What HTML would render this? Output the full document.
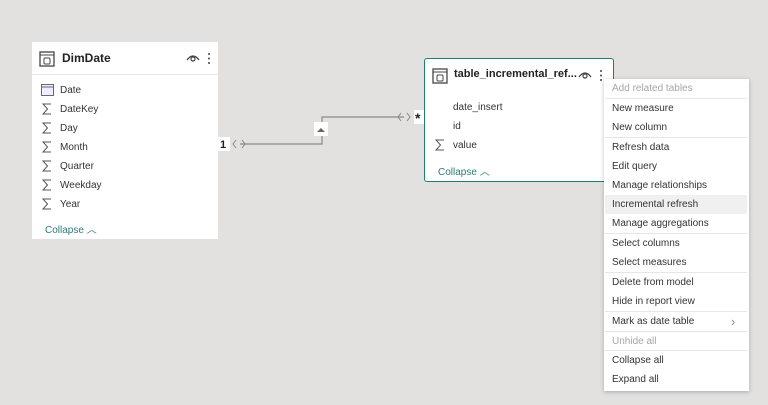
<!DOCTYPE html>
<html><head><style>
*{margin:0;padding:0;box-sizing:border-box}
body{width:768px;height:405px;background:#e2e1df;font-family:"Liberation Sans",sans-serif;position:relative;overflow:hidden;color:#333}
.a{position:absolute;white-space:nowrap}
.card{position:absolute;background:#fff}
.f{font-size:10px;color:#333}
.m{position:absolute;left:605px;width:142px;height:19px;font-size:10px;line-height:19px;padding-left:7px;color:#333}
.sep{position:absolute;left:605px;width:142px;height:1px;background:#e6e6e6}
</style></head><body>
<svg width="0" height="0" style="position:absolute"><defs><symbol id="sg" viewBox="0 0 10 12"><path d="M9 1 H1 L5.5 6 L1 11 H9" fill="none" stroke="#555" stroke-width="1"/></symbol></defs></svg>
<svg class="a" style="left:0;top:0" width="768" height="405">
<path d="M240 144 H322 V117 H404" stroke="#8a8a8a" stroke-width="1.2" fill="none"/>
<path d="M236 140 l-3 4 l3 4 M242 140 l3 4 l-3 4" stroke="#888" fill="none"/>
<path d="M401 113 l-3 4 l3 4 M407 113 l3 4 l-3 4" stroke="#888" fill="none"/>
<rect x="314" y="122" width="14" height="14" fill="#fff"/>
<path d="M317 132 l4 -4 l4 4z" fill="#666"/>
<rect x="218" y="137" width="12" height="14" fill="#fff"/>
<text x="220" y="148" font-size="11" font-weight="bold" fill="#222" font-family="Liberation Sans">1</text>
<rect x="414" y="110" width="11" height="14" fill="#fff"/>
<text x="415" y="123" font-size="14" font-weight="bold" fill="#222" font-family="Liberation Sans">*</text>
</svg>

<div class="card" style="left:32px;top:42px;width:186px;height:197px">
 <svg class="a" style="left:7px;top:9px" width="16" height="16"><rect x="1" y="1" width="14" height="14" fill="none" stroke="#444" stroke-width="1.3"/><line x1="1" y1="4" x2="15" y2="4" stroke="#444"/><rect x="5" y="7" width="6" height="6" rx="1" fill="none" stroke="#444"/></svg>
 <div class="a" style="left:30px;top:9px;font-size:12px;font-weight:bold;color:#222">DimDate</div>
 <svg class="a" style="left:154px;top:11px" width="14" height="10"><path d="M1 7 Q7 -1 13 7" fill="none" stroke="#444" stroke-width="1.2"/><circle cx="7" cy="6" r="2" fill="none" stroke="#444" stroke-width="1.2"/></svg>
 <svg class="a" style="left:175px;top:10px" width="4" height="14"><circle cx="2" cy="2" r="1" fill="#444"/><circle cx="2" cy="6.5" r="1" fill="#444"/><circle cx="2" cy="11" r="1" fill="#444"/></svg>
 <div class="a" style="left:0;top:32px;width:186px;height:1px;background:#e8e8e8"></div>
 <svg class="a" style="left:9px;top:42px" width="13" height="12"><rect x="0.5" y="0.5" width="12" height="11" fill="#eef" stroke="#667"/><line x1="0" y1="3" x2="13" y2="3" stroke="#667"/></svg>
 <div class="a f" style="left:28px;top:43px">Date</div>
 <svg class="a" style="left:10px;top:61px" width="10" height="12"><use href="#sg"/></svg><div class="a f" style="left:28px;top:62px">DateKey</div>
 <svg class="a" style="left:10px;top:80px" width="10" height="12"><use href="#sg"/></svg><div class="a f" style="left:28px;top:81px">Day</div>
 <svg class="a" style="left:10px;top:99px" width="10" height="12"><use href="#sg"/></svg><div class="a f" style="left:28px;top:100px">Month</div>
 <svg class="a" style="left:10px;top:118px" width="10" height="12"><use href="#sg"/></svg><div class="a f" style="left:28px;top:119px">Quarter</div>
 <svg class="a" style="left:10px;top:137px" width="10" height="12"><use href="#sg"/></svg><div class="a f" style="left:28px;top:138px">Weekday</div>
 <svg class="a" style="left:10px;top:156px" width="10" height="12"><use href="#sg"/></svg><div class="a f" style="left:28px;top:157px">Year</div>
 <div class="a" style="left:13px;top:179px;font-size:10px;color:#2b7a78">Collapse ︿</div>
</div>

<div class="card" style="left:424px;top:58px;width:190px;height:124px;border:1.5px solid #1f7f6e;border-radius:3px">
 <svg class="a" style="left:7px;top:9px" width="16" height="16"><rect x="1" y="1" width="14" height="14" fill="none" stroke="#444" stroke-width="1.3"/><line x1="1" y1="4" x2="15" y2="4" stroke="#444"/><rect x="5" y="7" width="6" height="6" rx="1" fill="none" stroke="#444"/></svg>
 <div class="a" style="left:29px;top:9px;font-size:11px;font-weight:bold;color:#222">table_incremental_ref...</div>
 <svg class="a" style="left:153px;top:11px" width="14" height="10"><path d="M1 7 Q7 -1 13 7" fill="none" stroke="#444" stroke-width="1.2"/><circle cx="7" cy="6" r="2" fill="none" stroke="#444" stroke-width="1.2"/></svg>
 <svg class="a" style="left:174px;top:10px" width="4" height="14"><circle cx="2" cy="2" r="1" fill="#444"/><circle cx="2" cy="6.5" r="1" fill="#444"/><circle cx="2" cy="11" r="1" fill="#444"/></svg>
 <div class="a f" style="left:28px;top:43px">date_insert</div>
 <div class="a f" style="left:28px;top:62px">id</div>
 <svg class="a" style="left:10px;top:80px" width="10" height="12"><use href="#sg"/></svg><div class="a f" style="left:28px;top:81px">value</div>
 <div class="a" style="left:13px;top:104px;font-size:10px;color:#2b7a78">Collapse ︿</div>
</div>

<div class="card" style="left:604px;top:79px;width:145px;height:312px;box-shadow:0 1px 4px rgba(0,0,0,.25)"></div>
<div class="m" style="top:79px;color:#a6a6a6">Add related tables</div>
<div class="sep" style="top:98px"></div>
<div class="m" style="top:99px">New measure</div>
<div class="m" style="top:118px">New column</div>
<div class="sep" style="top:137px"></div>
<div class="m" style="top:138px">Refresh data</div>
<div class="m" style="top:157px">Edit query</div>
<div class="m" style="top:176px">Manage relationships</div>
<div class="m" style="top:195px;background:#f0f0f0">Incremental refresh</div>
<div class="m" style="top:214px">Manage aggregations</div>
<div class="sep" style="top:233px"></div>
<div class="m" style="top:234px">Select columns</div>
<div class="m" style="top:253px">Select measures</div>
<div class="sep" style="top:272px"></div>
<div class="m" style="top:273px">Delete from model</div>
<div class="m" style="top:292px">Hide in report view</div>
<div class="sep" style="top:311px"></div>
<div class="m" style="top:312px">Mark as date table<span style="position:absolute;left:126px;color:#888;font-size:13px">›</span></div>
<div class="sep" style="top:331px"></div>
<div class="m" style="top:332px;color:#a6a6a6">Unhide all</div>
<div class="sep" style="top:350px"></div>
<div class="m" style="top:351px">Collapse all</div>
<div class="m" style="top:370px">Expand all</div>
</body></html>
